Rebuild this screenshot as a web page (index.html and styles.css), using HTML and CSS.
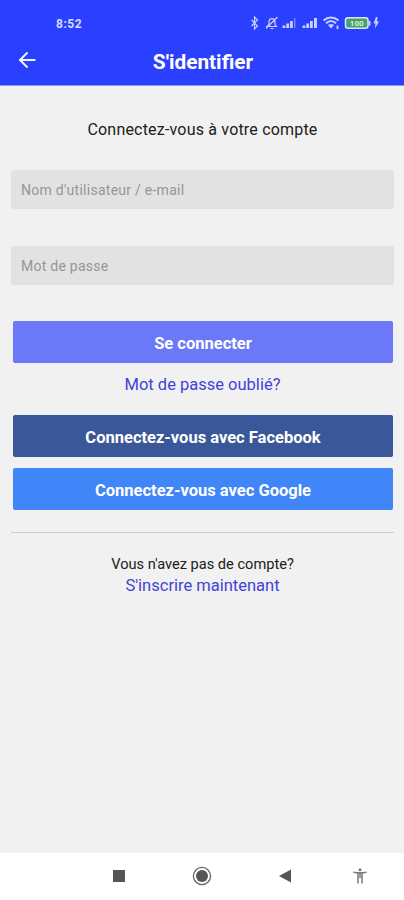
FILE: index.html
```html
<!DOCTYPE html>
<html lang="fr">
<head>
<meta charset="utf-8">
<title>S'identifier</title>
<link rel="stylesheet" href="styles.css">
</head>
<body>
<header class="header">
  <div class="status">
    <span class="time">8:52</span>
    <svg class="status-icons" width="132" height="16" viewBox="0 0 132 16" fill="none" stroke="#c9d0ff" stroke-width="1.2">
      <path d="M1.500 5l6 6-3 3V2l3 3-6 6"/>
      <path d="M17 11.500h9.500L25 9.500V7c0-4.500-6-4.500-6 0v2.500zM20.500 13.500h3M16 13.500L27.500 2"/>
      <g fill="#c9d0ff" stroke="none">
        <path d="M32.500 13v-2.500h2.800V13zM36.300 13V8.500h2.800V13zM40 13V6h2.800v7z"/>
        <path d="M44 13V3h1.500v10z" opacity=".45"/>
        <path d="M52.500 13v-2.500h2.800V13zM56.300 13V8.500h2.800V13zM60 13V6h2.800v7zM64 13V3h3v10z"/>
        <path d="M127.500 2h-1.500l-2.500 6.500h2l-.5 5 4-7h-2z"/>
      </g>
      <path d="M73.500 5.500c4.500-4 10.500-4 15 0M76 8.200c3-2.700 7-2.700 10 0" stroke-width="1.900"/>
      <path d="M78 10c2-1.500 4-1.500 6 0l-3 3.500z" fill="#c9d0ff" stroke="none"/>
      <path d="M87.500 10.500v3.500" stroke-width="1.800"/>
      <rect x="95.500" y="2.800" width="22.500" height="10.500" rx="2.500" fill="#48a070" stroke="#dce5ff" stroke-width="1.500"/>
      <path d="M119.500 6v4.500" stroke-width="2"/>
      <text class="battery" x="106.700" y="11.200" text-anchor="middle">100</text>
    </svg>
  </div>
  <div class="bar">
    <svg class="back" width="18" height="18" viewBox="0 0 18 18" fill="none" stroke="#f0f2ff" stroke-width="2"><path d="M17.500 9H2.500M9.500 1.500L2 9l7.500 7.500"/></svg>
    <h1 class="title">S'identifier</h1>
  </div>
</header>
<main class="main">
  <p class="intro">Connectez-vous à votre compte</p>
  <input class="field" type="text" placeholder="Nom d'utilisateur / e-mail">
  <input class="field" type="password" placeholder="Mot de passe">
  <button class="btn login">Se connecter</button>
  <a class="link forgot">Mot de passe oublié?</a>
  <button class="btn facebook">Connectez-vous avec Facebook</button>
  <button class="btn google">Connectez-vous avec Google</button>
  <hr class="rule">
  <p class="question">Vous n'avez pas de compte?</p>
  <a class="link signup">S'inscrire maintenant</a>
</main>
<nav class="nav">
  <svg width="14" height="14" viewBox="0 0 14 14"><path d="M1 1h12v12H1z" fill="#555"/></svg>
  <svg width="20" height="20" viewBox="0 0 20 20"><circle cx="10" cy="10" r="8.600" fill="none" stroke="#666" stroke-width="1.300"/><circle cx="10" cy="10" r="6" fill="#555"/></svg>
  <svg width="14" height="14" viewBox="0 0 14 14"><path d="M1 7l12-6.500v13z" fill="#555"/></svg>
  <svg width="14" height="18" viewBox="0 0 14 18"><circle cx="7" cy="2.700" r="1.500" fill="#777"/><path d="M.5 5.200Q7 6.500 13.500 5.200M5 6v10.500M9 6v10.500M7 6v5" fill="none" stroke="#777" stroke-width="1.500"/></svg>
</nav>
</body>
</html>
```
FILE: styles.css
```css
* { box-sizing: border-box; }
body {
  margin: 0;
  height: 900px;
  display: flex;
  flex-direction: column;
  background: #f1f1f1;
  font-family: Roboto, sans-serif;
  color: #202020;
  overflow: hidden;
}
.header {
  height: 86px;
  background: #2b40ff;
  border-bottom: 1px solid #8994fb;
}
.status {
  height: 38px;
  padding: 15px 22px 0 56px;
  display: flex;
  justify-content: space-between;
}
.time { font-size: 12px; line-height: 18px; font-weight: 700; color: #d5dcff; letter-spacing: .5px; }
.battery { font: 700 8px Roboto, sans-serif; fill: #d8f5d0; stroke: none; }
.bar {
  height: 47px;
  padding: 0 18px;
  display: grid;
  grid-template-columns: 18px 1fr 16px;
  align-items: center;
}
.back { margin-bottom: 3px; }
.title {
  margin: 0;
  text-align: center;
  font-size: 20.8px;
  line-height: 24px;
  font-weight: 700;
  color: #fff;
}
.main {
  flex: 1;
  padding: 33px 10px 0 11px;
  display: flex;
  flex-direction: column;
}
.intro { margin: 0 0 29px; text-align: center; font-size: 16px; line-height: 22px; letter-spacing: .19px; }
.field {
  height: 39px;
  margin: 0 0 37px;
  padding: 1px 10px 0;
  border: 0;
  border-radius: 2px;
  background: #e2e2e2;
  font: 14px Roboto, sans-serif;
  letter-spacing: .26px;
}
.field::placeholder { color: #969696; opacity: 1; }
.field + .btn { margin-top: -1px; }
.btn {
  height: 42px;
  margin: 0 1px 0 2px;
  padding: 2px 0 0;
  border: 0;
  border-radius: 2px;
  color: #fff;
  font: 700 16.5px Roboto, sans-serif;
}
.login { background: #6b78f8; }
.facebook { background: #3a5899; margin-bottom: 11px; }
.google { background: #4186f8; padding-top: 3px; }
.link { text-align: center; font-size: 16.5px; line-height: 22px; color: #3f43d8; }
.forgot { margin: 11px 0 19px; }
.signup { margin-top: 1px; }
.rule { width: 100%; height: 1px; margin: 22px 0 21px; border: 0; background: #cdcdcd; }
.question { margin: 0; text-align: center; font-size: 14.6px; line-height: 20px; }
.nav {
  height: 47px;
  padding: 0 37px 2px 112px;
  display: grid;
  grid-template-columns: 80px 86px 75px 14px;
  align-items: center;
  background: #fff;
}
```
